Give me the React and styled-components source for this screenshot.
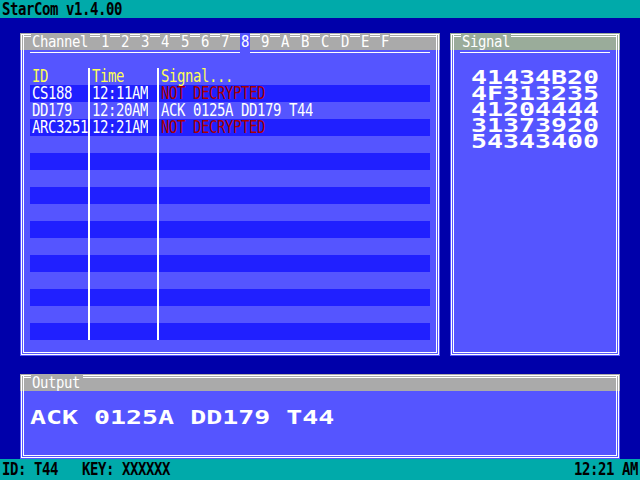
import React from "react";
import styled, { createGlobalStyle } from "styled-components";

const Global = createGlobalStyle`
  html, body { margin: 0; padding: 0; background: #0000aa; }
  body { font-family: "DejaVu Sans Mono", "Liberation Mono", monospace; }
  * { box-sizing: border-box; }
`;

const Screen = styled.div`
  width: 640px;
  height: 480px;
  display: flex;
  flex-direction: column;
  background: #0000aa;
  overflow: hidden;
`;

const Bar = styled.div`
  height: ${(p) => p.$h}px;
  flex: none;
  background: #00aaaa;
  color: #000;
  display: flex;
  align-items: center;
  justify-content: space-between;
  padding: 0 2px;
  font-weight: bold;
  font-size: 14px;
  letter-spacing: -0.43px;
  white-space: pre;
`;

const Tall = styled.span`
  display: inline-block;
  line-height: 13px;
  transform: scaleY(${(p) => p.$s || 1.2});
  white-space: pre;
`;

const Main = styled.div`
  flex: 1;
  display: flex;
  flex-direction: column;
  gap: 18px;
  padding: 15px 20px 0;
`;

const PanelRow = styled.div`
  display: flex;
  gap: 10px;
  height: 323px;
`;

const Panel = styled.section`
  position: relative;
  background: #5555ff;
  display: flex;
  flex-direction: column;
  width: ${(p) => (p.$w ? `${p.$w}px` : "auto")};
  flex: ${(p) => (p.$w ? "none" : 1)};
  height: ${(p) => (p.$h ? `${p.$h}px` : "auto")};
  &::after {
    content: "";
    position: absolute;
    left: 1px;
    right: 1px;
    top: 1px;
    bottom: 1px;
    border: 3px double #fff;
    border-top: none;
    pointer-events: none;
  }
`;

const Header = styled.header`
  height: 17px;
  flex: none;
  background: ${(p) => p.$bg};
  display: flex;
  align-items: flex-start;
`;

const Corner = styled.div`
  flex: none;
  width: 10px;
  height: 16px;
  margin: 1px 0 0 1px;
  border-top: 3px double #fff;
  border-left: 3px double #fff;
`;

const Segment = styled.div`
  flex: ${(p) => (p.$end ? 1 : "none")};
  width: ${(p) => (p.$end ? "auto" : "10px")};
  height: ${(p) => (p.$end ? "16px" : "3px")};
  margin: 1px ${(p) => (p.$end ? "1px" : 0)} 0 0;
  border-top: 3px double #fff;
  border-right: ${(p) => (p.$end ? "3px double #fff" : "none")};
`;

const Label = styled.div`
  flex: none;
  width: ${(p) => p.$w}px;
  height: ${(p) => (p.$active ? 19 : 17)}px;
  padding-left: 1px;
  background: ${(p) => (p.$active ? "#5555ff" : "transparent")};
  color: #fff;
  font-size: 14px;
  letter-spacing: -0.43px;
  line-height: 17px;
  position: relative;
  z-index: 1;
`;

const Rule = styled.div`
  display: flex;
  gap: 10px;
  height: 1px;
  margin: 2px 10px 0;
`;

const RuleLine = styled.div`
  height: 1px;
  background: #fff;
  flex: ${(p) => (p.$w ? "none" : 1)};
  width: ${(p) => (p.$w ? `${p.$w}px` : "auto")};
`;

const Table = styled.div`
  display: flex;
  flex-direction: column;
  margin: 15px 10px 0;
`;

const Row = styled.div`
  display: grid;
  grid-template-columns: 58px 69px 1fr;
  height: 17px;
  background: ${(p) => (p.$dark ? "#2020ff" : "transparent")};
`;

const Cell = styled.div`
  padding-left: 2px;
  border-left: ${(p) => (p.$div ? "2px solid #fff" : "none")};
  color: ${(p) => p.$c || "#fff"};
  font-size: 14px;
  letter-spacing: -0.43px;
  line-height: 17px;
  white-space: pre;
`;

const BigText = styled.div`
  color: #fff;
  font-weight: bold;
  font-size: 19px;
  line-height: 16px;
  white-space: pre;
  transform: scaleX(1.4);
  transform-origin: ${(p) => p.$origin || "left"} top;
  text-align: ${(p) => (p.$center ? "center" : "left")};
  margin: ${(p) => p.$m};
`;

const channels = ["1", "2", "3", "4", "5", "6", "7", "8", "9", "A", "B", "C", "D", "E", "F"];

const rows = [
  ["CS188", "12:11AM", "NOT DECRYPTED", true],
  ["DD179", "12:20AM", "ACK 0125A DD179 T44", false],
  ["ARC3251", "12:21AM", "NOT DECRYPTED", true],
];

const signal = ["41434B20", "4F313235", "41204444", "31373920", "54343400"];

export default function App() {
  const tableRows = [];
  for (let i = 0; i < 15; i++) {
    const r = rows[i] || ["", "", "", false];
    tableRows.push(
      <Row key={i} $dark={i % 2 === 0}>
        <Cell><Tall>{r[0]}</Tall></Cell>
        <Cell $div><Tall>{r[1]}</Tall></Cell>
        <Cell $div $c={r[3] ? "#aa0000" : "#fff"}><Tall>{r[2]}</Tall></Cell>
      </Row>
    );
  }

  return (
    <Screen>
      <Global />
      <Bar $h={18}>
        <Tall $s={1.3}>StarCom v1.4.00</Tall>
      </Bar>
      <Main>
        <PanelRow>
          <Panel $w={420}>
            <Header $bg="#aaaaaa">
              <Corner />
              <Label $w={59}><Tall $s={1.15}>Channel</Tall></Label>
              {channels.map((c) => (
                <React.Fragment key={c}>
                  <Segment />
                  <Label $w={10} $active={c === "8"}><Tall $s={1.15}>{c}</Tall></Label>
                </React.Fragment>
              ))}
              <Segment $end />
            </Header>
            <Rule>
              <RuleLine $w={210} />
              <RuleLine />
            </Rule>
            <Table>
              <Row>
                <Cell $c="#ffff55"><Tall>ID</Tall></Cell>
                <Cell $div $c="#ffff55"><Tall>Time</Tall></Cell>
                <Cell $div $c="#ffff55"><Tall>Signal...</Tall></Cell>
              </Row>
              {tableRows}
            </Table>
          </Panel>
          <Panel>
            <Header $bg="#9aac9a">
              <Corner />
              <Label $w={50}><Tall $s={1.15}>Signal</Tall></Label>
              <Segment $end />
            </Header>
            <Rule>
              <RuleLine />
            </Rule>
            <BigText $center $origin="center" $m="16px 0 0">
              {signal.join("\n")}
            </BigText>
          </Panel>
        </PanelRow>
        <Panel $h={66}>
          <Header $bg="#aaaaaa">
            <Corner />
            <Label $w={52}><Tall $s={1.15}>Output</Tall></Label>
            <Segment $end />
          </Header>
          <BigText $m="18px 0 0 10px">ACK 0125A DD179 T44</BigText>
        </Panel>
      </Main>
      <Bar $h={21}>
        <Tall $s={1.3}>ID: T44   KEY: XXXXXX</Tall>
        <Tall $s={1.3}>12:21 AM</Tall>
      </Bar>
    </Screen>
  );
}
